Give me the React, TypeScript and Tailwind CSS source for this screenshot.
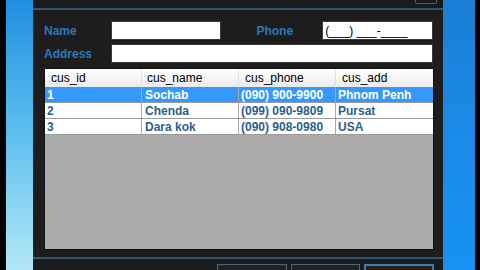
import React from "react";

const rows = [
  { id: "1", name: "Sochab", phone: "(090) 900-9900", add: "Phnom Penh" },
  { id: "2", name: "Chenda", phone: "(099) 090-9809", add: "Pursat" },
  { id: "3", name: "Dara kok", phone: "(090) 908-0980", add: "USA" },
];

export default function App() {
  return (
    <div
      className="w-[480px] h-[270px] flex overflow-hidden bg-black"
      style={{ fontFamily: '"Liberation Sans", Arial, sans-serif' }}
    >
      <div className="w-[6px] bg-black" />
      <div className="w-[27px] bg-gradient-to-b from-[#1f8fe0] via-[#5cc0ee] to-[#b2e8f6]" />
      <div className="w-[410px] flex flex-col bg-[#1d1d1d]">
        <div className="h-[8px] bg-[#1a1a1a] flex justify-end pr-[6px]">
          <div className="w-[22px] h-[4px] border border-t-0 border-[#5a5a5a] rounded-b-[2px]" />
        </div>
        <div className="h-[2px] bg-[#2d5877]" />
        <div className="flex-1 flex flex-col pl-[10px] pr-[10px] pt-[11px] border-l border-[#262626]">
          <div className="flex items-center h-[19px]">
            <div className="w-[67px] text-[12px] font-bold text-[#2c77b8]">Name</div>
            <div className="w-[110px] h-[19px] bg-white border border-[#3a3a3a]" />
            <div className="w-[36px]" />
            <div className="w-[66px] text-[12px] font-bold text-[#2c77b8]">Phone</div>
            <div className="w-[111px] h-[19px] bg-white border border-[#3a3a3a] flex items-center pl-[2px] text-[12px] text-black">
              (___) ___-____
            </div>
          </div>
          <div className="flex items-center h-[19px] mt-[4px]">
            <div className="w-[67px] text-[12px] font-bold text-[#2c77b8]">Address</div>
            <div className="w-[323px] h-[19px] bg-white border border-[#3a3a3a]" />
          </div>
          <div className="mt-[5px] h-[182px] w-[390px] bg-[#ababab] border border-[#111] flex flex-col">
            <div className="flex h-[18px] bg-gradient-to-b from-white to-[#ececec] text-[12px] text-black">
              <div className="w-[97px] pl-[6px] border-r border-[#e2e2e2] flex items-center">cus_id</div>
              <div className="w-[97px] pl-[5px] border-r border-[#e2e2e2] flex items-center">cus_name</div>
              <div className="w-[97px] pl-[6px] border-r border-[#e2e2e2] flex items-center">cus_phone</div>
              <div className="flex-1 pl-[6px] flex items-center">cus_add</div>
            </div>
            {rows.map((r, i) => {
              const sel = i === 0;
              return (
                <div
                  key={r.id}
                  className={
                    sel
                      ? "flex h-[16px] bg-[#3399ff] text-white text-[12px] font-bold border-b border-[#9a9a9a]"
                      : "flex h-[16px] bg-white text-[#2a5f8e] text-[12px] font-bold border-b border-[#9a9a9a]"
                  }
                >
                  <div className="w-[97px] pl-[2px] border-r border-[#a8a8a8] flex items-center">{r.id}</div>
                  <div className="w-[97px] pl-[3px] border-r border-[#a8a8a8] flex items-center">{r.name}</div>
                  <div className="w-[97px] pl-[2px] border-r border-[#a8a8a8] flex items-center">{r.phone}</div>
                  <div className="flex-1 pl-[2px] flex items-center">{r.add}</div>
                </div>
              );
            })}
          </div>
        </div>
        <div className="h-[2px] bg-[#2d5877]" />
        <div className="h-[11px] flex items-end justify-end pr-[9px] gap-[4px] bg-[#1b1b1b]">
          <div className="w-[70px] h-[6px] border border-b-0 border-[#4b6780] bg-[#222]" />
          <div className="w-[69px] h-[6px] border border-b-0 border-[#4b6780] bg-[#222]" />
          <div className="w-[70px] h-[6px] border-2 border-b-0 border-[#3e7bb0] bg-[#222]" />
        </div>
      </div>
      <div className="w-[32px] bg-gradient-to-b from-[#1a7fd6] via-[#1b8ae8] to-[#1793f2]" />
      <div className="w-[5px] bg-black" />
    </div>
  );
}
